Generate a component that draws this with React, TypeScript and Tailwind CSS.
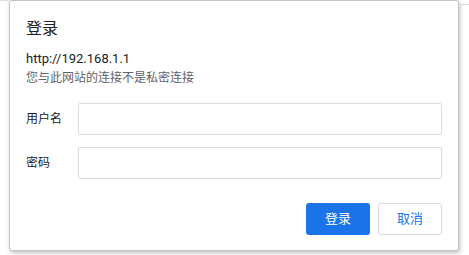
export default function App() {
  const font = { fontFamily: '"Segoe UI", Roboto, "Noto Sans CJK SC", sans-serif' };
  return (
    <div className="w-[469px] h-[255px] bg-white overflow-hidden relative" style={font}>
      <div className="absolute left-0 top-0 w-[9px] h-px bg-[#dcdcdc]" />
      <div className="absolute right-0 top-[4px] w-[10px] h-px bg-[#dcdcdc]" />
      <div className="ml-[9px] w-[450px] h-[251px] bg-white border border-[#c4c4c4] rounded-[3px] shadow-[1px_2px_4px_rgba(0,0,0,0.25)] flex flex-col px-[16px]">
        <h1 className="mt-[17px] text-[16px] leading-[22px] text-[#202124]">登录</h1>
        <p className="mt-[10px] text-[13px] leading-[18px] text-[#202124]">http://192.168.1.1</p>
        <p className="mt-[2px] text-[12px] leading-[16px] text-[#5f6368]">您与此网站的连接不是私密连接</p>
        <div className="mt-[17px] flex flex-col gap-[12px]">
          <div className="flex items-center">
            <label className="w-[52px] text-[12px] text-[#202124]">用户名</label>
            <input className="w-[364px] h-[32px] border border-[#dadce0] rounded-[2px] outline-none px-2 text-[13px]" />
          </div>
          <div className="flex items-center">
            <label className="w-[52px] text-[12px] text-[#202124]">密码</label>
            <input type="password" className="w-[364px] h-[32px] border border-[#dadce0] rounded-[2px] outline-none px-2 text-[13px]" />
          </div>
        </div>
        <div className="mt-[24px] flex justify-end gap-[8px]">
          <button className="w-[64px] h-[32px] rounded-[3px] bg-[#1a73e8] text-white text-[13px]">登录</button>
          <button className="w-[64px] h-[32px] rounded-[3px] bg-white border border-[#dadce0] text-[#1a73e8] text-[13px]">取消</button>
        </div>
      </div>
    </div>
  );
}
